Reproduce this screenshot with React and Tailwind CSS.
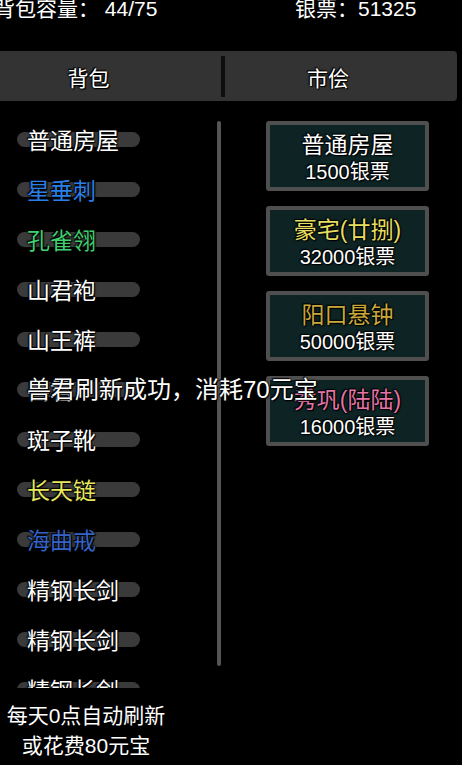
import React from 'react';

const outline = '[text-shadow:0_0_2px_#000,0_0_2px_#000,1px_1px_1px_#000,-1px_-1px_1px_#000]';

const bagItems = [
  { name: '普通房屋', color: 'text-white' },
  { name: '星垂刺', color: 'text-[#2a7fe6]' },
  { name: '孔雀翎', color: 'text-[#3fd070]' },
  { name: '山君袍', color: 'text-white' },
  { name: '山王裤', color: 'text-white' },
  { name: '兽君', color: 'text-white' },
  { name: '斑子靴', color: 'text-white' },
  { name: '长天链', color: 'text-[#e8e85c]' },
  { name: '海曲戒', color: 'text-[#3463c8]' },
  { name: '精钢长剑', color: 'text-white' },
  { name: '精钢长剑', color: 'text-white' },
  { name: '精钢长剑', color: 'text-white' },
];

const shopItems = [
  { name: '普通房屋', price: '1500银票', color: 'text-white' },
  { name: '豪宅(廿捌)', price: '32000银票', color: 'text-[#e6de62]' },
  { name: '阳口悬钟', price: '50000银票', color: 'text-[#c9a83a]' },
  { name: '秀巩(陆陆)', price: '16000银票', color: 'text-[#e274a6]' },
];

export default function App() {
  return (
    <div
      className="relative w-[462px] h-[765px] overflow-hidden bg-black text-white"
      style={{ fontFamily: '"Liberation Sans", "Noto Sans CJK SC", sans-serif' }}
    >
      {/* top stats */}
      <div className="flex h-[52px] text-[21px] leading-[20px] -mt-[1px]">
        <div className="-ml-[6px] w-[301px]">背包容量：&nbsp;44/75</div>
        <div>银票：51325</div>
      </div>

      {/* tabs */}
      <div className="flex h-[50px] w-[457px] items-center rounded-r-[4px] bg-[#333333] pt-[5px]">
        <div className={`w-[221px] pr-[44px] text-center text-[21px] ${outline}`}>背包</div>
        <div className="h-[41px] w-[4px] -mt-[5px] bg-[#0d0d0d]" />
        <div className={`flex-1 pr-[26px] text-center text-[21px] ${outline}`}>市侩</div>
      </div>

      {/* body */}
      <div className="mt-[13px] flex">
        <div className="relative h-[574px] w-[222px] overflow-hidden">
          {bagItems.map((item, i) => (
            <div key={i} className="relative flex h-[50px] items-center pt-[4px]">
              <div className="absolute left-[17px] top-[18px] h-[15px] w-[123px] rounded-full bg-[#3a3a3a]" />
              <span className={`relative ml-[27px] text-[23px] leading-[26px] ${item.color} ${outline}`}>
                {item.name}
              </span>
            </div>
          ))}
          <div className="absolute left-[217px] top-[7px] h-[545px] w-[4px] rounded-full bg-[#555555]" />
        </div>

        <div className="ml-[44px] mt-[7px] flex flex-col gap-[15px]">
          {shopItems.map((item, i) => (
            <div
              key={i}
              className="flex h-[70px] w-[163px] flex-col items-center justify-center rounded-[3px] border-[4px] border-[#4f4f4f] bg-[#0e2424] pt-[3px]"
            >
              <div className={`text-[23px] leading-[28px] ${item.color} ${outline}`}>{item.name}</div>
              <div className={`text-[20px] leading-[26px] text-white ${outline}`}>{item.price}</div>
            </div>
          ))}
        </div>
      </div>

      {/* footer */}
      <div className="mt-[13px] w-[172px] text-center text-[21px] leading-[30px]">
        <div>每天0点自动刷新</div>
        <div>或花费80元宝</div>
      </div>

      {/* toast */}
      <div className={`absolute left-[27px] top-[376px] text-[24px] leading-[28px] text-white ${outline}`}>
        兽君刷新成功，消耗70元宝
      </div>
    </div>
  );
}
